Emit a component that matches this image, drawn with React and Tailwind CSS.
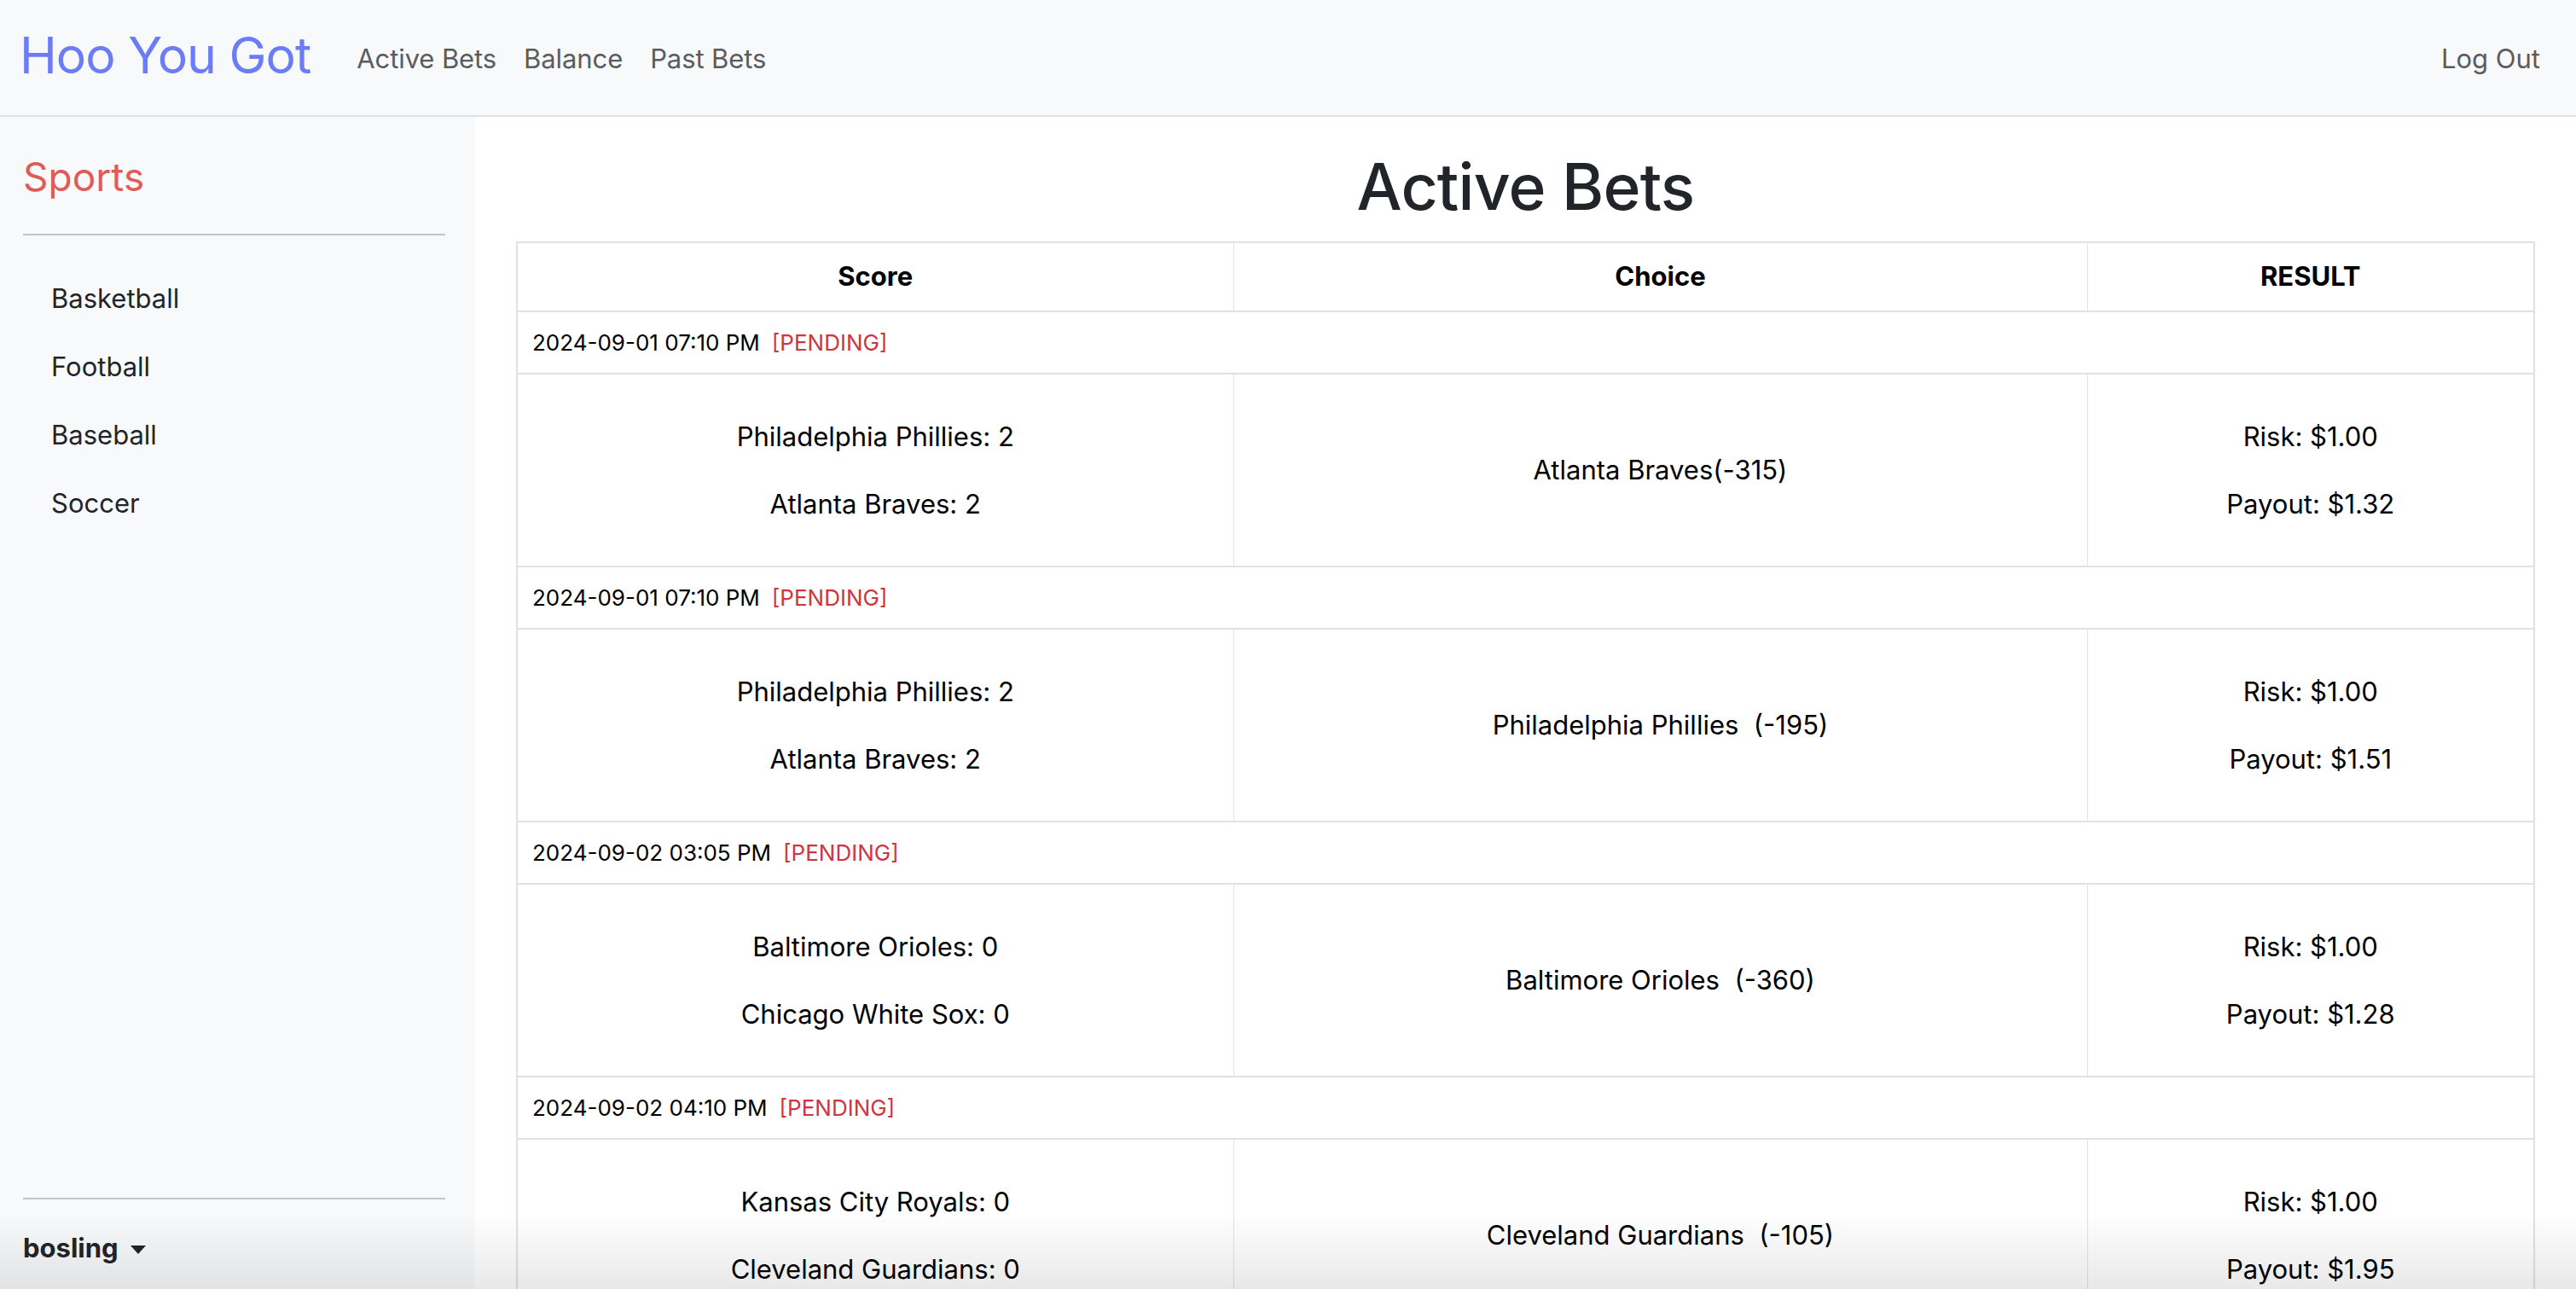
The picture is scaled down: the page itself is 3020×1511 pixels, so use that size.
import React from "react";

const bets = [
  {
    date: "2024-09-01 07:10 PM",
    home: "Philadelphia Phillies: 2",
    away: "Atlanta Braves: 2",
    choice: "Atlanta Braves(-315)",
    risk: "$1.00",
    payout: "$1.32",
  },
  {
    date: "2024-09-01 07:10 PM",
    home: "Philadelphia Phillies: 2",
    away: "Atlanta Braves: 2",
    choice: "Philadelphia Phillies  (-195)",
    risk: "$1.00",
    payout: "$1.51",
  },
  {
    date: "2024-09-02 03:05 PM",
    home: "Baltimore Orioles: 0",
    away: "Chicago White Sox: 0",
    choice: "Baltimore Orioles  (-360)",
    risk: "$1.00",
    payout: "$1.28",
  },
  {
    date: "2024-09-02 04:10 PM",
    home: "Kansas City Royals: 0",
    away: "Cleveland Guardians: 0",
    choice: "Cleveland Guardians  (-105)",
    risk: "$1.00",
    payout: "$1.95",
  },
];

const sports = ["Basketball", "Football", "Baseball", "Soccer"];

const Navbar = () => (
  <nav className="h-[137px] shrink-0 bg-[#f8f9fa] border-b-2 border-[#dee2e6] flex items-center pl-[23px] pr-[42px]">
    <a className="text-[59px] leading-none text-[#6b7cf6] tracking-[-1px] mr-[54px] pb-[6px]">
      Hoo You Got
    </a>
    <div className="flex items-center gap-[32px] text-[31px] text-[#5a5c5f] tracking-[-0.1px] pt-[4px]">
      <a>Active Bets</a>
      <a>Balance</a>
      <a>Past Bets</a>
    </div>
    <a className="ml-auto text-[31px] text-[#5a5c5f] pt-[4px]">Log Out</a>
  </nav>
);

const Sidebar = () => (
  <aside className="w-[556px] shrink-0 bg-[#f8f9fa] flex flex-col px-[27px] pt-[43px]">
    <div className="text-[46px] leading-[55px] text-[#df5d56]">Sports</div>
    <hr className="mt-[39px] border-0 border-t-2 border-[#c2c3c4] mr-[7px]" />
    <ul className="mt-[34px] flex flex-col">
      {sports.map((s) => (
        <li
          key={s}
          className="h-[80px] flex items-center pl-[33px] text-[31px] text-[#212529]"
        >
          {s}
        </li>
      ))}
    </ul>
    <div className="mt-auto">
      <hr className="border-0 border-t-2 border-[#c2c3c4] mr-[7px]" />
      <div className="h-[105px] flex items-center gap-[14px] pt-[10px] text-[31px] font-bold text-[#212529]">
        <span>bosling</span>
        <svg width="18" height="10" viewBox="0 0 18 10" className="mt-[2px]">
          <path d="M0 0 L18 0 L9 10 Z" fill="#212529" />
        </svg>
      </div>
    </div>
  </aside>
);

const BetRows = ({ bet }) => (
  <>
    <tr>
      <td
        colSpan={3}
        className="h-[73px] border-y-2 border-x-2 border-[#dee2e6] pl-[17px] text-[26px] text-black"
      >
        {bet.date}
        <span className="ml-[14px] text-[#d0353f]">[PENDING]</span>
      </td>
    </tr>
    <tr>
      <td className="h-[226px] border-y-2 border-l-2 border-r border-[#dee2e6] text-center text-[31px] text-black">
        <p className="leading-[40px]">{bet.home}</p>
        <p className="leading-[40px] mt-[39px]">{bet.away}</p>
      </td>
      <td className="border-y-2 border-x border-[#dee2e6] text-center text-[31px] text-black whitespace-pre">
        {bet.choice}
      </td>
      <td className="border-y-2 border-r-2 border-l border-[#dee2e6] text-center text-[31px] text-black">
        <p className="leading-[40px]">Risk: {bet.risk}</p>
        <p className="leading-[40px] mt-[39px]">Payout: {bet.payout}</p>
      </td>
    </tr>
  </>
);

const App = () => {
  return (
    <div className="relative h-[1511px] w-[3020px] overflow-hidden flex flex-col bg-white font-['Inter','Noto_Sans',sans-serif]">
      <Navbar />
      <div className="flex flex-1 min-h-0">
        <Sidebar />
        <main className="flex-1 bg-white pl-[49px] pr-[48px] overflow-hidden">
          <h1 className="mt-[36px] mb-[18px] text-center text-[75px] leading-[92px] font-medium text-[#212529] tracking-[-0.8px]">
            Active Bets
          </h1>
          <table className="w-full border-collapse table-fixed">
            <colgroup>
              <col className="w-[840px]" />
              <col className="w-[1001px]" />
              <col />
            </colgroup>
            <thead>
              <tr>
                <th className="h-[81px] border-2 border-[#dee2e6] border-r text-[31px] font-bold text-black">
                  Score
                </th>
                <th className="border-y-2 border-x border-[#dee2e6] text-[31px] font-bold text-black">
                  Choice
                </th>
                <th className="border-y-2 border-r-2 border-l border-[#dee2e6] text-[31px] font-bold text-black">
                  RESULT
                </th>
              </tr>
            </thead>
            <tbody>
              {bets.map((bet, i) => (
                <BetRows key={i} bet={bet} />
              ))}
            </tbody>
          </table>
        </main>
      </div>
      <div className="pointer-events-none absolute inset-x-0 bottom-0 h-[90px] bg-gradient-to-b from-transparent to-[rgba(0,0,0,0.09)]" />
    </div>
  );
};

export default App;
